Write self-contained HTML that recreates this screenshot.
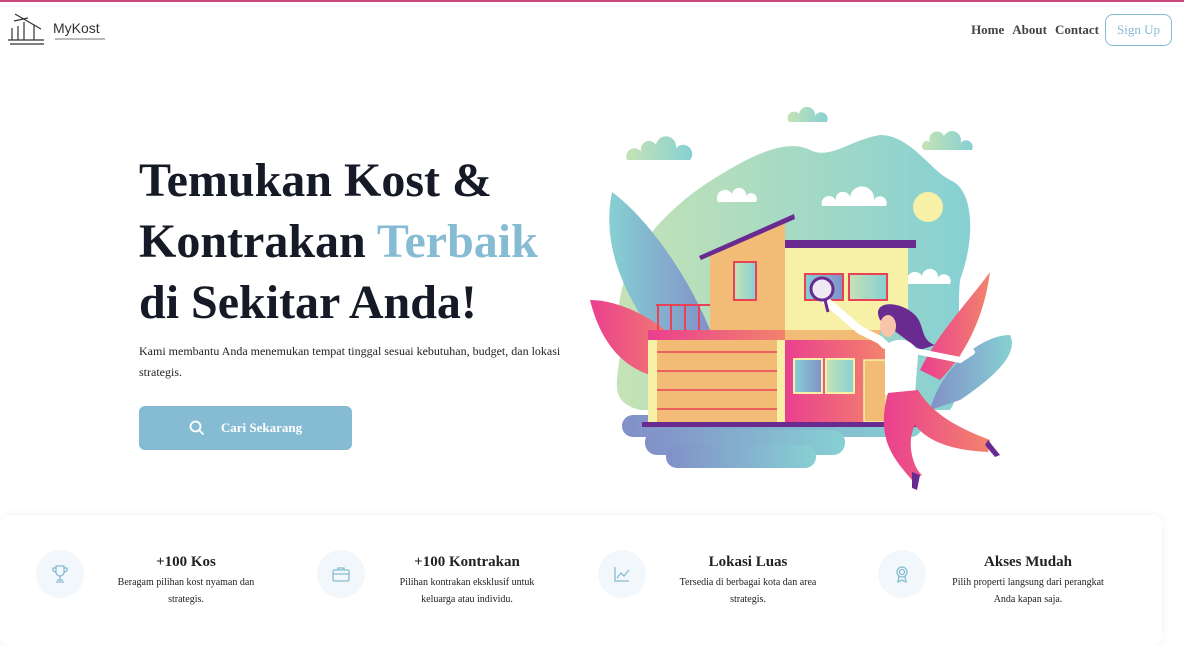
<!DOCTYPE html>
<html><head><meta charset="utf-8"><style>
*{margin:0;padding:0;box-sizing:border-box}
body{width:1184px;height:632px;overflow:hidden;background:#fff;font-family:"Liberation Serif",serif;position:relative}
.top{position:absolute;left:0;top:0;width:1184px;height:2px;background:#c9457a}
nav{position:absolute;right:12px;top:14px;display:flex;align-items:center}
nav a{font-weight:bold;font-size:13px;color:#444;margin-left:8px;text-decoration:none}
.su{border:1px solid #86bcd3;color:#86bcd3!important;border-radius:8px;padding:7px 11px;margin-left:6px!important;font-weight:normal!important}
h1{position:absolute;left:139px;top:150px;font-size:48px;line-height:61px;color:#161a26;font-weight:bold}
h1 span{color:#86bcd3}
.p{position:absolute;left:139px;top:341px;font-size:12px;line-height:21px;color:#222;width:440px}
.btn{position:absolute;left:139px;top:406px;width:213px;height:44px;background:#86bcd3;border-radius:6px;color:#fff;font-weight:bold;font-size:13px;display:flex;align-items:center;justify-content:center}
.card{position:absolute;left:0;top:515px;width:1162px;height:130px;background:#fff;border-radius:10px;box-shadow:0 0 10px rgba(0,0,0,.06)}
.f{position:absolute;top:550px;width:280px}
.f .ic{position:absolute;left:0;top:0;width:48px;height:48px;border-radius:50%;background:#f2f7fb;display:flex;align-items:center;justify-content:center}
.f h3{position:absolute;left:60px;width:180px;text-align:center;top:4px;font-size:15px;color:#222}
.f p{position:absolute;left:70px;width:160px;text-align:center;top:24px;font-size:10px;line-height:17px;color:#222}
</style></head><body>
<div class="top"></div>
<svg style="position:absolute;left:4px;top:12px" width="46" height="34" viewBox="0 0 46 34" fill="none" stroke="#333" stroke-width="1.2">
<path d="M11 2 L37 17 M10 9 L24 6 M8 16 V28 M14 14 V28 M20 10 V28 M30 13 V28 M4 28 H40 M6 32 H40"/></svg>
<div style="position:absolute;left:53px;top:20px;font-family:'Liberation Sans',sans-serif;font-size:14px;color:#333">MyKost</div>
<div style="position:absolute;left:55px;top:38px;width:50px;height:2px;background:#bbb"></div>
<nav><a>Home</a><a>About</a><a>Contact</a><a class="su">Sign Up</a></nav>
<h1>Temukan Kost &amp;<br>Kontrakan <span>Terbaik</span><br>di Sekitar Anda!</h1>
<div class="p">Kami membantu Anda menemukan tempat tinggal sesuai kebutuhan, budget, dan lokasi strategis.</div>
<div class="btn"><svg width="16" height="16" viewBox="0 0 16 16" fill="none" stroke="#fff" stroke-width="1.8" style="margin-right:16px"><circle cx="6.5" cy="6.5" r="5"/><path d="M10 10l4.5 4.5"/></svg>Cari Sekarang</div>
<svg style="position:absolute;left:0;top:0" width="1184" height="510">
<defs>
<linearGradient id="g1" x1="0" x2="1"><stop offset="0" stop-color="#c5e3b5"/><stop offset="1" stop-color="#86d0d3"/></linearGradient>
<linearGradient id="g2" x1="0" x2="1"><stop offset="0" stop-color="#8290c8"/><stop offset="1" stop-color="#86d0d3"/></linearGradient>
<linearGradient id="g3" x1="0" x2="1"><stop offset="0" stop-color="#ea3f8f"/><stop offset="1" stop-color="#f3836c"/></linearGradient>
<linearGradient id="g4" x1="0" x2="1"><stop offset="0" stop-color="#86d0d3"/><stop offset="1" stop-color="#8290c8"/></linearGradient>
</defs>
<path d="M620 330 C610 270 660 210 720 175 C760 150 790 140 810 150 C830 160 850 140 880 135 C910 135 930 170 950 180 C975 190 975 240 960 280 C955 330 970 380 950 410 L640 410 C600 400 625 370 620 330Z" fill="url(#g1)"/>
<path d="M627 160 h63 a8 8 0 0 0 -14 -12 a10 10 0 0 0 -20 -3 a8 8 0 0 0 -14 8 a6 6 0 0 0 -15 7z" fill="url(#g1)"/>
<path d="M789 122 h38 a6 6 0 0 0 -12 -6 a8 8 0 0 0 -16 -2 a6 6 0 0 0 -10 8z" fill="url(#g1)"/>
<path d="M924 150 h48 a6 6 0 0 0 -12 -6 a8 8 0 0 0 -16 -8 a6 6 0 0 0 -14 6 a5 5 0 0 0 -6 8z" fill="url(#g1)"/>
<path d="M718 202 h38 a5 5 0 0 0 -10 -6 a7 7 0 0 0 -14 -2 a5 5 0 0 0 -14 8z" fill="#fff"/>
<path d="M822 206 h64 a6 6 0 0 0 -12 -6 a12 12 0 0 0 -24 -3 a6 6 0 0 0 -14 4 a5 5 0 0 0 -14 5z" fill="#fff"/>
<path d="M908 284 h42 a6 6 0 0 0 -12 -6 a8 8 0 0 0 -16 -2 a6 6 0 0 0 -14 8z" fill="#fff"/>
<circle cx="928" cy="207" r="15" fill="#f6f1a6"/>
<path d="M612 192 C650 220 690 280 710 330 L650 330 C630 300 600 250 612 192Z" fill="url(#g4)"/>
<path d="M590 300 C620 300 660 320 680 345 L650 375 C620 365 600 340 590 300Z" fill="url(#g3)"/>
<path d="M990 272 C970 300 940 330 920 370 L940 380 C970 350 985 310 990 272Z" fill="url(#g3)"/>
<path d="M1010 335 C980 335 940 370 930 410 L960 400 C990 380 1020 355 1010 335Z" fill="url(#g2)"/>
<rect x="622" y="415" width="300" height="22" rx="11" fill="url(#g2)"/>
<rect x="645" y="430" width="200" height="25" rx="12" fill="url(#g2)"/>
<rect x="666" y="445" width="150" height="23" rx="11" fill="url(#g2)"/>
<path d="M710 252 L785 222 L785 330 L710 330Z" fill="#f2bb76"/>
<path d="M699 256 L794 214 L795 219 L701 260Z" fill="#6a2b90"/>
<rect x="785" y="248" width="123" height="82" fill="#f6f1a6"/>
<rect x="785" y="240" width="131" height="8" fill="#6a2b90"/>
<rect x="734" y="262" width="22" height="38" fill="url(#g1)" stroke="#e94257" stroke-width="2"/>
<rect x="805" y="274" width="38" height="26" fill="url(#g4)" stroke="#e94257" stroke-width="2"/>
<rect x="849" y="274" width="38" height="26" fill="url(#g1)" stroke="#e94257" stroke-width="2"/>
<path d="M656 305 h54 M658 305 v25 M671 305 v25 M685 305 v25 M699 305 v25" stroke="#e94257" stroke-width="2"/>
<rect x="648" y="330" width="137" height="10" fill="url(#g3)"/>
<rect x="785" y="330" width="95" height="10" fill="#f2bb76"/>
<rect x="648" y="340" width="137" height="82" fill="#f6f1a6"/>
<rect x="657" y="340" width="120" height="82" fill="#f2bb76"/>
<path d="M657 352 h120 M657 371 h120 M657 390 h120 M657 409 h120" stroke="#e94257" stroke-width="1.5"/>
<rect x="785" y="340" width="100" height="82" fill="url(#g3)"/>
<rect x="794" y="359" width="28" height="34" fill="url(#g4)" stroke="#f6f1a6" stroke-width="2"/>
<rect x="826" y="359" width="28" height="34" fill="url(#g1)" stroke="#f6f1a6" stroke-width="2"/>
<rect x="864" y="360" width="22" height="62" fill="#f2bb76" stroke="#f6f1a6" stroke-width="1.5"/>
<rect x="642" y="422" width="288" height="5" fill="#6a2b90"/>
<path d="M825 300 L860 330 L880 340 L885 345" stroke="#fff" stroke-width="8" stroke-linecap="round" fill="none"/>
<circle cx="822" cy="289" r="11" fill="#efe9f4" stroke="#6a2b90" stroke-width="3"/>
<path d="M825 300 l3 12" stroke="#6a2b90" stroke-width="3"/>
<path d="M880 320 C870 300 900 300 915 315 C925 325 920 340 935 345 L920 350 Z" fill="#6a2b90"/>
<ellipse cx="888" cy="326" rx="8" ry="11" fill="#f8c5a8"/>
<path d="M885 345 C900 335 915 340 918 355 L915 395 L885 395 Z" fill="#fff"/>
<path d="M910 350 L960 360 L972 352" stroke="#fff" stroke-width="6" stroke-linecap="round" fill="none"/>
<path d="M888 393 L918 390 C930 410 950 425 990 440 L988 452 C945 450 925 438 915 425 C905 445 915 470 922 475 L912 480 C895 460 875 440 888 393Z" fill="url(#g3)"/>
<path d="M988 440 l12 15 l-5 2 l-10 -12z M912 472 l8 3 l-3 15 l-5 -2z" fill="#6a2b90"/>
</svg>
<div class="card"></div>
<div class="f" style="left:36px"><div class="ic"><svg width="20" height="20" viewBox="0 0 20 20" fill="none" stroke="#86bcd3" stroke-width="1.3"><path d="M6 2h8v6a4 4 0 0 1-8 0z M6 4H3a3 3 0 0 0 3 4 M14 4h3a3 3 0 0 1-3 4 M10 12v4 M6 18h8 M7 16h6"/></svg></div><h3>+100 Kos</h3><p>Beragam pilihan kost nyaman dan strategis.</p></div>
<div class="f" style="left:317px"><div class="ic"><svg width="20" height="20" viewBox="0 0 20 20" fill="none" stroke="#86bcd3" stroke-width="1.3"><rect x="2" y="6" width="16" height="11" rx="1.5"/><path d="M7 6V4h6v2 M2 10h16"/></svg></div><h3>+100 Kontrakan</h3><p>Pilihan kontrakan eksklusif untuk keluarga atau individu.</p></div>
<div class="f" style="left:598px"><div class="ic"><svg width="20" height="20" viewBox="0 0 20 20" fill="none" stroke="#86bcd3" stroke-width="1.3"><path d="M3 3v14h14 M5 14l4-5 3 3 5-6"/></svg></div><h3>Lokasi Luas</h3><p>Tersedia di berbagai kota dan area strategis.</p></div>
<div class="f" style="left:878px"><div class="ic"><svg width="20" height="20" viewBox="0 0 20 20" fill="none" stroke="#86bcd3" stroke-width="1.3"><circle cx="10" cy="8" r="5"/><circle cx="10" cy="8" r="2.5"/><path d="M7 12l-1 6 4-2 4 2-1-6"/></svg></div><h3>Akses Mudah</h3><p>Pilih properti langsung dari perangkat Anda kapan saja.</p></div>
</body></html>
